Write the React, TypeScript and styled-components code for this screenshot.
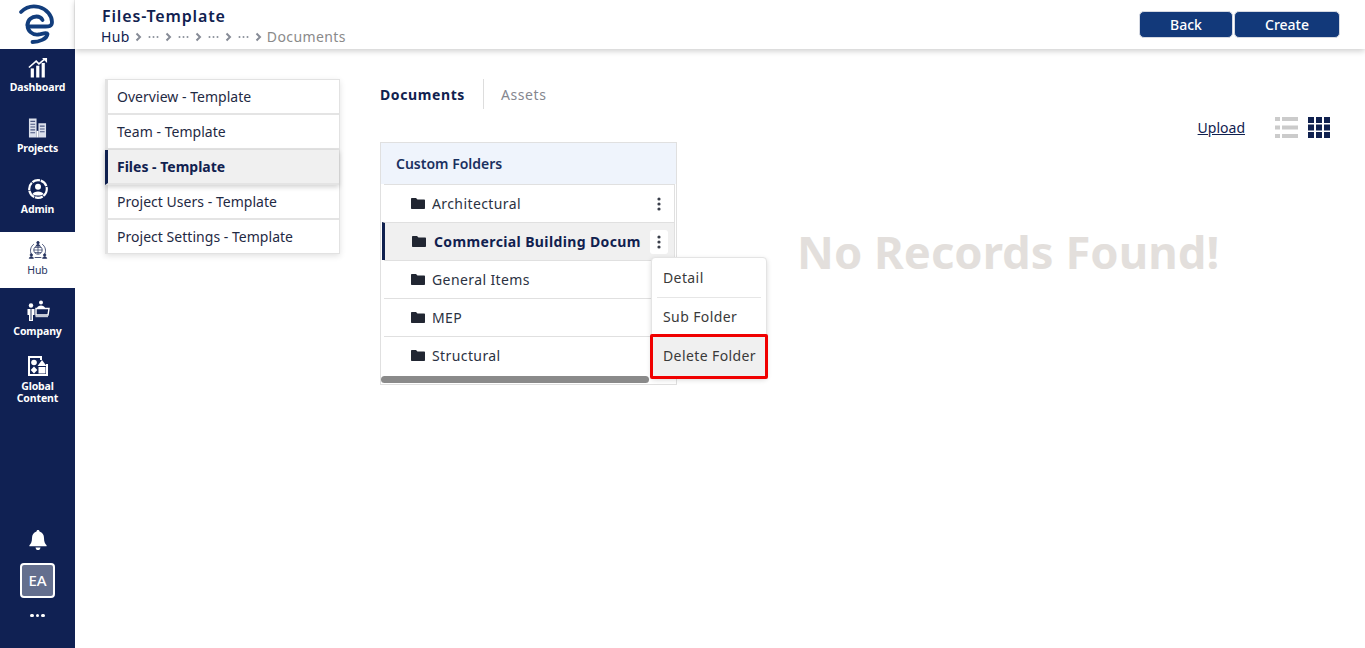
import React from "react";
import styled, { createGlobalStyle } from "styled-components";

const Global = createGlobalStyle`
  html, body { margin: 0; padding: 0; background: #fff; height: 648px; overflow: hidden; }
  body { font-family: "Noto Sans", "Open Sans", sans-serif; color: #212529; }
  * { box-sizing: border-box; }
`;
const Shell = styled.div`display: flex; width: 1365px; height: 648px; overflow: hidden;`;
const Sidebar = styled.aside`width: 75px; flex: none; height: 648px; background: #102153; display: flex; flex-direction: column; align-items: stretch;`;
const LogoBox = styled.div`height: 49px; background: #fff; display: flex; justify-content: center; align-items: center; border-right: 1px solid #eee;`;
const NavList = styled.nav`display: flex; flex-direction: column;`;
const NavItem = styled.div<{ $active?: boolean; $tight?: boolean }>`
  height: 61px; padding-top: 6px; display: flex; flex-direction: column; align-items: center;
  ${(p) => (p.$active ? "height: 56px; margin-bottom: 5px; background: #fff; color: #25335f; font-weight: 400;" : "color: #fff; font-weight: 700;")}
  ${(p) => p.$tight && "margin-top: -6px;"}
`;
const NavIcon = styled.div`width: 24px; height: 24px; display: flex; align-items: center; justify-content: center;`;
const NavLabel = styled.span`font-size: 10.5px; line-height: 12px; margin-top: 2px; text-align: center; white-space: pre-line; letter-spacing: -0.12px;`;
const SideBottom = styled.div`margin-top: auto; display: flex; flex-direction: column; align-items: center; padding-bottom: 31px;`;
const Avatar = styled.div`width: 35px; height: 35px; margin-top: 13px; border: 2px solid #fff; border-radius: 4px; background: #646f8e; color: #fff; font-size: 15px; font-weight: 500; display: flex; align-items: center; justify-content: center;`;
const Dots = styled.div`display: flex; gap: 2px; margin-top: 16px;`;
const Dot = styled.i`width: 3.5px; height: 3.5px; border-radius: 50%; background: #fff;`;

const Main = styled.div`flex: 1; display: flex; flex-direction: column; min-width: 0;`;
const Header = styled.header`height: 49px; flex: none; display: flex; justify-content: space-between; padding: 6px 25px 0 26px; box-shadow: 0 2px 6px rgba(0,0,0,.2); background: #fff;`;
const Title = styled.div`font-size: 16px; line-height: 20px; font-weight: 600; color: #10214f; letter-spacing: .85px; margin-left: 1px;`;
const Crumbs = styled.div`display: flex; align-items: center; gap: 5px; font-size: 14px; line-height: 20px; margin-top: 1px; color: #8a8a8a; letter-spacing: .4px;`;
const CrumbRoot = styled.span`color: #10214f;`;
const Actions = styled.div`display: flex; gap: 1px; padding-top: 5px;`;
const ActionButton = styled.button<{ $w: number }>`width: ${(p) => p.$w}px; height: 27px; border: 1px solid #d5d9e2; border-radius: 5px; background: #12397a; color: #fff; font: 500 14px "Noto Sans", sans-serif; padding: 0;`;

const Body = styled.div`flex: 1; display: flex; padding: 30px 25px 0 30px; align-items: flex-start;`;
const SideMenu = styled.div`width: 235px; flex: none; display: flex; flex-direction: column; border: 1px solid #e2e2e2; border-left-width: 3px; box-shadow: 0 2px 6px rgba(0,0,0,.12);`;
const MenuItem = styled.div<{ $active?: boolean }>`
  height: 35px; padding-left: 9px; display: flex; align-items: center; font-size: 14px; color: #1f2a44; letter-spacing: .03px; white-space: nowrap; border-bottom: 2px solid #e4e4e4;
  &:last-child { border-bottom: 0; height: 33px; }
  ${(p) => p.$active && `background: #f0f0f0; font-weight: 700; color: #10214f; margin-left: -3px; padding-left: 9px; letter-spacing: 0; border-left: 3px solid #10214f; box-shadow: 0 2px 5px rgba(0,0,0,.18); position: relative;`}
`;
const Content = styled.div`flex: 1; margin-left: 40px; min-width: 0;`;
const Tabs = styled.div`display: flex; align-items: center; height: 30px;`;
const Tab = styled.div<{ $active?: boolean }>`font-size: 14px; letter-spacing: .6px; ${(p) => (p.$active ? "font-weight: 700; color: #10214f;" : "color: #85878f;")}`;
const TabDivider = styled.div`width: 1px; height: 30px; background: #ddd; margin: 0 17px 0 18px;`;
const Toolbar = styled.div`display: flex; justify-content: flex-end; align-items: center; height: 22px; margin-top: 7px; padding-right: 10px;`;
const UploadLink = styled.a`font-size: 14px; color: #10214f; text-decoration: underline; margin-right: 30px;`;
const ViewIcons = styled.div`display: flex; gap: 10px;`;
const Columns = styled.div`display: flex; align-items: flex-start; margin-top: 4px;`;
const Panel = styled.section`position: relative; width: 297px; height: 243px; border: 1px solid #e0e0e0; flex: none;`;
const PanelHead = styled.div`height: 41px; background: #eff4fc; display: flex; align-items: center; padding-left: 15px; font-size: 14px; font-weight: 600; color: #1a3060;`;
const Row = styled.div<{ $active?: boolean }>`
  height: 38px; display: flex; align-items: center; margin: 0 1px 0 ${(p) => (p.$active ? "1px" : "3px")}; border-top: 1px solid #e0e0e0; border-right: 1px solid #e0e0e0; white-space: nowrap; overflow: visible;
  padding-left: 27px;
  ${(p) => p.$active && `background: #f0f0f0; border-left: 3px solid #10214f;`}
`;
const RowLabel = styled.span<{ $active?: boolean }>`margin-left: ${(p) => (p.$active ? "8px" : "7px")}; font-size: 14px; letter-spacing: ${(p) => (p.$active ? ".38px" : ".4px")}; width: 207px; overflow: hidden; color: ${(p) => (p.$active ? "#10214f" : "#2b3242")}; font-weight: ${(p) => (p.$active ? 700 : 400)};`;
const Kebab = styled.div<{ $active?: boolean }>`position: absolute; right: 8px; width: 18px; height: 24px; display: flex; align-items: center; justify-content: center; border-radius: 3px; ${(p) => p.$active && "background: #fff;"}`;
const Scrollbar = styled.div`position: absolute; left: 0; bottom: 1px; width: 268px; height: 7px; background: #8a8a8a; border-radius: 4px;`;
const Dropdown = styled.div`position: absolute; left: 270px; top: 114px; width: 116px; height: 121px; background: #fff; border: 1px solid #e4e4e4; border-radius: 4px; box-shadow: 0 2px 5px rgba(0,0,0,.15); z-index: 2; display: flex; flex-direction: column;`;
const DropItem = styled.div<{ $hot?: boolean }>`
  height: 39px; display: flex; align-items: center; padding-left: 11px; font-size: 14px; letter-spacing: .4px; color: #3a3a3a; white-space: nowrap;
  ${(p) => p.$hot && "height: 45px; margin: -2px -2px -2px -2px; padding-left: 10px; padding-bottom: 2px; background: #f0f0f0; border: 3px solid #f00000; border-radius: 2px;"}
`;
const DropRule = styled.div`height: 1px; background: #e6e6e6; margin: 0 5px;`;
const Empty = styled.div`margin: 81px 0 0 120px; font-size: 45.4px; line-height: 56px; font-weight: 700; color: #e3dfdc; white-space: nowrap;`;

const Logo = () => (
  <svg width="50" height="48" viewBox="0 0 50 48" fill="none" stroke="#123d7c" strokeWidth="3.8" strokeLinecap="round">
    <path d="M9 11 C14 6 21 4.5 27 6 C35 8 40 15 40 21 C40 26 36 25.5 32 25.5 L17 25.5" />
    <path d="M15.5 24 C15.5 18.5 20 15.5 24.5 15.5 C27.5 15.5 29.5 17 30.5 19" />
    <path d="M15.5 24 C15.5 30 20 34 26 33.5 C30 33 35 31 35.5 33 C35 38 27 41 20.5 41" />
  </svg>
);
const W = "#fff";
const Chart = () => (
  <svg width="20" height="21" viewBox="0 0 22 22" fill={W}>
    <rect x="3" y="12" width="3.5" height="10" /><rect x="9" y="9" width="3.5" height="13" /><rect x="15" y="6" width="3.5" height="16" />
    <path d="M1 11 L9 4 L12 7 L18 2" fill="none" stroke={W} strokeWidth="1.8" /><path d="M15.5 .5 H21 V6 Z" />
  </svg>
);
const Buildings = () => (
  <svg width="19" height="22" viewBox="0 0 20 22">
    <rect x="1" y="1" width="8" height="20" fill="#dbe0ec" /><rect x="11" y="6" width="8" height="15" fill="#dbe0ec" />
    <path d="M2.5 4h5M2.5 7h5M2.5 10h5M2.5 13h5M2.5 16h5M12.5 9h5M12.5 12h5M12.5 15h5" stroke="#4a5680" strokeWidth="1.2" />
    <rect x="9" y="14" width="2" height="7" fill="#fff" />
  </svg>
);
const AdminIcon = () => (
  <svg width="22" height="22" viewBox="0 0 22 22" fill="none">
    <circle cx="11" cy="11" r="8.8" stroke={W} strokeWidth="2.2" strokeDasharray="8 .8" />
    <circle cx="11" cy="8.7" r="3" fill={W} />
    <path d="M5.5 16 C6.5 12.5 15.5 12.5 16.5 16 C14 18 8 18 5.5 16 Z" fill={W} />
  </svg>
);
const HubIcon = () => (
  <svg width="20" height="20" viewBox="0 0 24 24" fill="none" stroke="#25335f">
    <path d="M7 5 C3 8 2 13 4 17 M17 5 C21 8 22 13 20 17 M8 21 H16" strokeWidth="1" />
    <circle cx="12" cy="12" r="5" strokeWidth="1" /><path d="M7 12h10M12 7v10M8.5 9h7M8.5 15h7" strokeWidth=".8" />
    <circle cx="12" cy="3.2" r="1.5" fill="#25335f" /><path d="M9.8 7 C10 4.8 14 4.8 14.2 7Z" fill="#25335f" />
    <circle cx="4" cy="18" r="1.4" fill="#25335f" /><path d="M1.5 22 C2 19.5 6 19.5 6.5 22Z" fill="#25335f" />
    <circle cx="20" cy="18" r="1.4" fill="#25335f" /><path d="M17.5 22 C18 19.5 22 19.5 22.5 22Z" fill="#25335f" />
  </svg>
);
const CompanyIcon = () => (
  <svg width="24" height="22" viewBox="0 0 24 22" fill="none">
    <circle cx="5" cy="5.5" r="2.2" fill={W} />
    <path d="M1.5 9 H8.5 V15 H7 V21 H3 V15 H1.5 Z" fill={W} /><path d="M5 9 V20" stroke="#102153" strokeWidth=".9" />
    <circle cx="15" cy="2.5" r="2" fill={W} /><path d="M11 8 C11.5 4.5 18.5 4.5 19 8 Z" fill={W} />
    <path d="M10 8.5 H23 L22 15 H10 Z" stroke={W} strokeWidth="1.4" /><path d="M9.5 16.5 H22" stroke="#c6cbd8" strokeWidth="1.4" />
  </svg>
);
const GlobalIcon = () => (
  <svg width="22" height="22" viewBox="0 0 22 22" fill={W}>
    <path d="M1 1 H15 V5 H13 V3 H3 V19 H19 V9 H21 V21 H1 Z" />
    <circle cx="7" cy="7.5" r="2.8" /><path d="M15 5 L19.5 11 H10.5 Z" /><path d="M7 11.5 L10.3 15 L7 18.5 L3.7 15 Z" /><rect x="11.5" y="12" width="7" height="6.5" />
  </svg>
);
const Bell = () => (
  <svg width="18" height="20" viewBox="0 0 18 20" fill={W}>
    <path d="M9 0 C10 0 10.5 .6 10.5 1.6 C13.5 2.4 15 5 15 8 C15 12 16 13.6 17.6 15.2 V16.3 H.4 V15.2 C2 13.6 3 12 3 8 C3 5 4.5 2.4 7.5 1.6 C7.5 .6 8 0 9 0 Z" />
    <path d="M6.5 17.4 H11.5 C11.3 19 10.3 20 9 20 C7.7 20 6.7 19 6.5 17.4 Z" />
  </svg>
);
const Chevron = () => (
  <svg width="7" height="10" viewBox="0 0 7 10" fill="none" stroke="#868b96" strokeWidth="2"><path d="M1.5 1.5 L5 5 L1.5 8.5" /></svg>
);
const Ellipsis = () => (
  <svg width="13" height="4" viewBox="0 0 13 4" fill="#8a909a"><circle cx="2.5" cy="2" r="1" /><circle cx="6.5" cy="2" r="1" /><circle cx="10.5" cy="2" r="1" /></svg>
);
const Folder = () => (
  <svg width="14" height="11" viewBox="0 0 14 11" fill="#212632"><path d="M0 1 C0 .4 .4 0 1 0 H5 L6.5 1.6 H13 C13.6 1.6 14 2 14 2.6 V10 C14 10.6 13.6 11 13 11 H1 C.4 11 0 10.6 0 10 Z" /></svg>
);
const VDots = () => (
  <svg width="4" height="14" viewBox="0 0 4 14" fill="#3a3f4a"><circle cx="2" cy="2" r="1.6" /><circle cx="2" cy="7" r="1.6" /><circle cx="2" cy="12" r="1.6" /></svg>
);
const ListIcon = () => (
  <svg width="23" height="21" viewBox="0 0 23 21" fill="#cbcbcb">
    <rect y="0" width="5" height="4" /><rect x="7" y="0" width="16" height="4" />
    <rect y="8.5" width="5" height="4" /><rect x="7" y="8.5" width="16" height="4" />
    <rect y="17" width="5" height="4" /><rect x="7" y="17" width="16" height="4" />
  </svg>
);
const GridIcon = () => (
  <svg width="22" height="21" viewBox="0 0 22 21" fill="#10214f">
    {[0, 8, 16].map((x) => [0, 7.5, 15].map((y) => <rect key={`${x}-${y}`} x={x} y={y} width="6" height="6" />))}
  </svg>
);

const nav = [
  { label: "Dashboard", icon: <Chart /> },
  { label: "Projects", icon: <Buildings /> },
  { label: "Admin", icon: <AdminIcon /> },
  { label: "Hub", icon: <HubIcon />, active: true },
  { label: "Company", icon: <CompanyIcon /> },
  { label: "Global\nContent", icon: <GlobalIcon />, tight: true },
];
const menu = ["Overview - Template", "Team - Template", "Files - Template", "Project Users - Template", "Project Settings - Template"];
const folders = ["Architectural", "Commercial Building Documents", "General Items", "MEP", "Structural"];

export default function App() {
  return (
    <Shell>
      <Global />
      <Sidebar>
        <LogoBox><Logo /></LogoBox>
        <NavList>
          {nav.map((n) => (
            <NavItem key={n.label} $active={n.active} $tight={n.tight}>
              <NavIcon>{n.icon}</NavIcon>
              <NavLabel>{n.label}</NavLabel>
            </NavItem>
          ))}
        </NavList>
        <SideBottom>
          <Bell />
          <Avatar>EA</Avatar>
          <Dots><Dot /><Dot /><Dot /></Dots>
        </SideBottom>
      </Sidebar>
      <Main>
        <Header>
          <div>
            <Title>Files-Template</Title>
            <Crumbs>
              <CrumbRoot>Hub</CrumbRoot>
              <Chevron /><Ellipsis /><Chevron /><Ellipsis /><Chevron /><Ellipsis /><Chevron /><Ellipsis /><Chevron />
              <span>Documents</span>
            </Crumbs>
          </div>
          <Actions>
            <ActionButton $w={94}>Back</ActionButton>
            <ActionButton $w={106}>Create</ActionButton>
          </Actions>
        </Header>
        <Body>
          <SideMenu>
            {menu.map((m, i) => <MenuItem key={m} $active={i === 2}>{m}</MenuItem>)}
          </SideMenu>
          <Content>
            <Tabs>
              <Tab $active>Documents</Tab>
              <TabDivider />
              <Tab>Assets</Tab>
            </Tabs>
            <Toolbar>
              <UploadLink>Upload</UploadLink>
              <ViewIcons><ListIcon /><GridIcon /></ViewIcons>
            </Toolbar>
            <Columns>
              <Panel>
                <PanelHead>Custom Folders</PanelHead>
                {folders.map((f, i) => (
                  <Row key={f} $active={i === 1}>
                    <Folder />
                    <RowLabel $active={i === 1}>{f}</RowLabel>
                    {i < 2 && <Kebab $active={i === 1}><VDots /></Kebab>}
                  </Row>
                ))}
                <Scrollbar />
                <Dropdown>
                  <DropItem>Detail</DropItem>
                  <DropRule />
                  <DropItem>Sub Folder</DropItem>
                  <DropItem $hot>Delete Folder</DropItem>
                </Dropdown>
              </Panel>
              <Empty>No Records Found!</Empty>
            </Columns>
          </Content>
        </Body>
      </Main>
    </Shell>
  );
}
